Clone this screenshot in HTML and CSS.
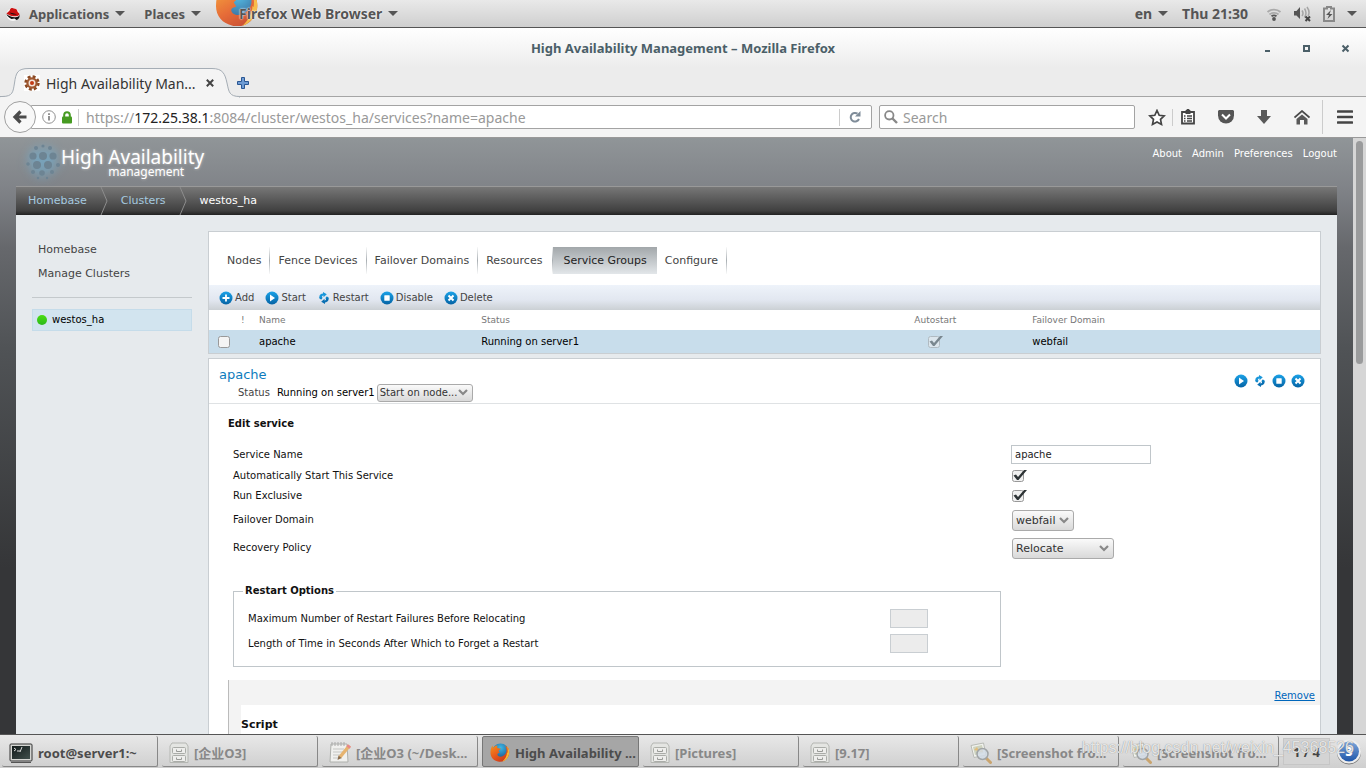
FILE: index.html
```html
<!DOCTYPE html>
<html lang="en">
<head>
<meta charset="utf-8">
<title>High Availability Management</title>
<link rel="stylesheet" href="styles.css">
</head>
<body>
<svg class="defs" aria-hidden="true">
  <defs>
    <linearGradient id="blue" x1="0" y1="0" x2="0" y2="1"><stop offset="0" stop-color="#1ba2e8"/><stop offset="1" stop-color="#0563a4"/></linearGradient>
    <linearGradient id="fox" x1="0" y1="0" x2="0.7" y2="1"><stop offset="0" stop-color="#f6921e"/><stop offset="0.55" stop-color="#e8591c"/><stop offset="1" stop-color="#c93a1a"/></linearGradient>
    <radialGradient id="globe" cx="0.5" cy="0.25" r="0.8"><stop offset="0" stop-color="#3cb8e6"/><stop offset="1" stop-color="#17407c"/></radialGradient>
    <linearGradient id="orb" x1="0" y1="0" x2="0" y2="1"><stop offset="0" stop-color="#7fa8dc"/><stop offset="1" stop-color="#1e55a8"/></linearGradient>
    <linearGradient id="gloss" x1="0" y1="0" x2="1" y2="1"><stop offset="0" stop-color="#111919"/><stop offset="1" stop-color="#41504d"/></linearGradient>
    <symbol id="i-add" viewBox="0 0 14 14"><circle cx="7" cy="7" r="6.500" fill="url(#blue)"/><path d="M7 3.500v7M3.500 7h7" stroke="#fff" stroke-width="1.800"/></symbol>
    <symbol id="i-start" viewBox="0 0 14 14"><circle cx="7" cy="7" r="6.500" fill="url(#blue)"/><path d="M5 3.500L10 7l-5 3.500z" fill="#fff"/></symbol>
    <symbol id="i-restart" viewBox="0 0 14 14"><path d="M6 1L9.800 3.200 6.500 6.200V4.500C5 4.700 4.600 5.800 5.200 7.300L3 8C1.500 5.500 2.800 2.800 6 2.600z" fill="#1b97da"/><path d="M8 13L4.200 10.800 7.500 7.800v1.700c1.500-.2 1.900-1.300 1.300-2.800L11 6c1.500 2.500.2 5.200-3 5.400z" fill="#0a6fb2"/><path d="M1.800 6.500l2.300 2.300 1.700-2.300zM12.200 7.500L9.900 5.200 8.200 7.500z" fill="#0f85c8"/></symbol>
    <symbol id="i-stop" viewBox="0 0 14 14"><circle cx="7" cy="7" r="6.500" fill="url(#blue)"/><rect x="4.300" y="4.300" width="5.400" height="5.400" rx=".5" fill="#fff"/></symbol>
    <symbol id="i-delete" viewBox="0 0 14 14"><circle cx="7" cy="7" r="6.500" fill="url(#blue)"/><path d="M4.500 4.500l5 5M9.500 4.500l-5 5" stroke="#fff" stroke-width="2"/></symbol>
    <symbol id="i-firefox" viewBox="0 0 40 40"><circle cx="21" cy="18" r="17" fill="url(#globe)"/><path d="M34 6c5 6 6 15 2 22-4 8-13 11-20 9C6 35 0 27 1 17c0-5 2-9 4-12l1 5c2-3 5-5 9-5l-1 4c2 2 6 2 8 2-1 2-4 3-5 5 1 2 2 2 2 4-2 0-5 1-4 4 2 4 8 4 11 2 5-3 8-7 7-14-1-3-2-5-3-7 2 1 4 3 5 5 0-2 0-3-1-4z" fill="url(#fox)"/><path d="M34 6c5 6 6 15 2 22-3 5-7 8-11 9 5-5 9-11 9-18l1 1c1-5 0-10-1-14z" fill="#fbb62f"/></symbol>
    <symbol id="i-cabinet" viewBox="0 0 20 22"><path d="M3 1h14l2 3v16.500H1V4z" fill="#e4e5e2" stroke="#b4b6b2"/><rect x="3.500" y="5.500" width="13" height="6" rx="1" fill="#eeeeec" stroke="#aaaca8"/><rect x="3.500" y="13.500" width="13" height="6" rx="1" fill="#eeeeec" stroke="#aaaca8"/><path d="M7.500 7.500v2h5v-2M7.500 15.500v2h5v-2" fill="none" stroke="#999b97"/></symbol>
    <symbol id="i-viewer" viewBox="0 0 22 22"><path d="M1 3.500L13.500 1 16 13 4 15.500z" fill="#f1f2ee" stroke="#b9bbb5"/><path d="M3 5l9-2 1.500 8-8.500 2z" fill="#cdd2be"/><path d="M4 8l3-3 2 4zM9 10l3-4 1 4z" fill="#e2bd79"/><path d="M16 16l4.500 4.500" stroke="#c9a46e" stroke-width="3" stroke-linecap="round"/><circle cx="12.500" cy="12" r="5.500" fill="#d2dce6" fill-opacity=".85" stroke="#a0a4a6" stroke-width="1.500"/></symbol>
  </defs>
</svg>

<header class="topbar">
  <button class="menu"><svg width="14" height="14" viewBox="0 0 14 14"><circle cx="7" cy="7.500" r="6.500" fill="#f8f8f8"/><path d="M.5 7C2 4 3.500 5 4 2.500 5 .5 7 .8 8 1.500c2 0 3 .8 3.500 3 .2 1 2 1.500 2 3-1 2-5 2-8 1.500C3 8.500 2 7 .5 7z" fill="#c11"/><path d="M.5 7c2 2 6 3.500 9 3.200 2-.2 4-1 4-2.700.6 3-1 5-3 5.500l-2-1.500-3 .5C3 10.800 1 9 .5 7zM3.500 5.500c2 2 5 2.500 7.500 1.800" fill="#111"/></svg><span>Applications</span><i class="caret"></i></button>
  <button class="menu"><span>Places</span><i class="caret"></i></button>
  <button class="menu app"><svg class="appicon" width="46" height="26"><use href="#i-firefox" y="-15" width="44" height="44"/></svg><span>Firefox Web Browser</span><i class="caret"></i></button>
  <div class="tray">
    <button class="menu">en<i class="caret"></i></button>
    <time>Thu 21:30</time>
    <svg width="16" height="14" viewBox="0 0 16 14"><path d="M1.500 5a9 8 0 0 1 13 0" fill="none" stroke="#aaa" stroke-width="1.800"/><path d="M3.500 7.500a6 5 0 0 1 9 0" fill="none" stroke="#aaa" stroke-width="1.800"/><path d="M5.500 9.200a4 3.500 0 0 1 5 0" fill="none" stroke="#555" stroke-width="1.800"/><circle cx="8" cy="12" r="1.900" fill="#555"/></svg>
    <svg width="17" height="16" viewBox="0 0 17 16"><path d="M0 5h2.500L6 1v12L2.500 9.500H0z" fill="#555"/><path d="M8 4.500q2 2.700 0 5.500M10.500 2.500q3 4.500 0 9M13 1q3.500 5 1 9" fill="none" stroke="#a5a5a5" stroke-width="1.500"/><path d="M11.500 10.500l4.500 4.500M16 10.500L11.500 15" stroke="#444" stroke-width="2"/></svg>
    <svg width="12" height="16" viewBox="0 0 12 16"><path d="M4 1h4v1.500h3v12.500H1V2.500h3z" fill="none" stroke="#888" stroke-width="2"/><path d="M8 4L3 9h3l-1.500 4L9.500 8h-3z" fill="#555"/></svg>
    <i class="caret"></i>
  </div>
</header>

<section class="browser">
  <div class="titlebar">
    <span class="wintitle">High Availability Management – Mozilla Firefox</span>
    <div class="winbuttons">
      <button aria-label="Minimize"><svg width="9" height="9" viewBox="0 0 9 9"><path d="M2 7h5" stroke="#4b5f68" stroke-width="2"/></svg></button>
      <button aria-label="Maximize"><svg width="9" height="9" viewBox="0 0 9 9"><rect x="2" y="2" width="5" height="5" fill="none" stroke="#4b5f68" stroke-width="2"/></svg></button>
      <button aria-label="Close window"><svg width="9" height="9" viewBox="0 0 9 9"><path d="M1.500 1.500l6 6M7.500 1.500l-6 6" stroke="#4b5f68" stroke-width="2"/></svg></button>
    </div>
  </div>
  <div class="tabstrip">
    <svg class="tabshape" width="240" height="30" viewBox="0 0 240 30"><path d="M0 28.500H2C13 28.500 13 24 14.500 15 16 5 17 .5 29 .5H212C223 .5 225 6 227 15 229 24 229 28.500 240 28.500V31H-1z" fill="#f4f4f4" stroke="#a5adb5"/></svg>
    <div class="tab">
      <svg width="16" height="16" viewBox="0 0 16 16"><rect width="16" height="16" fill="#fff"/><circle cx="8" cy="8" r="6.400" fill="none" stroke="#8a4a24" stroke-width="2.600" stroke-dasharray="2.900 2.100"/><circle cx="8" cy="8" r="4.600" fill="#f3e3d8" stroke="#a05830" stroke-width="2.200"/><circle cx="8" cy="8" r="2" fill="#c33b16"/></svg>
      <span>High Availability Man...</span>
      <button aria-label="Close tab"><svg width="8" height="8" viewBox="0 0 8 8"><path d="M.8.8l6.400 6.400M7.200.8L.8 7.200" stroke="#444" stroke-width="2"/></svg></button>
    </div>
    <button class="newtab" aria-label="New tab"><svg width="12" height="12" viewBox="0 0 12 12"><path d="M4.500.5h3v4h4v3h-4v4h-3v-4h-4v-3h4z" fill="#6f9cd4" stroke="#2a5693"/></svg></button>
  </div>
  <nav class="toolbar">
    <div class="address">
      <button class="back" aria-label="Back"><svg width="16" height="16" viewBox="0 0 16 16"><path d="M8.500 2.500L3 8l5.500 5.500M3.500 8h11" fill="none" stroke="#4b4b4b" stroke-width="3.200"/></svg></button>
      <div class="urlbox">
        <svg width="14" height="14" viewBox="0 0 14 14"><circle cx="7" cy="7" r="6.300" fill="none" stroke="#909090"/><path d="M7 6v4.500M7 3.200v1.700" stroke="#808080" stroke-width="1.700"/></svg>
        <svg width="12" height="13" viewBox="0 0 12 13"><rect x="1" y="5.500" width="10" height="7" rx="1" fill="#479b22"/><path d="M3.200 6V4a2.800 2.800 0 0 1 5.600 0v2" fill="none" stroke="#479b22" stroke-width="2"/></svg>
        <i class="rule"></i>
        <span class="url">https://<b>172.25.38.1</b>:8084/cluster/westos_ha/services?name=apache</span>
        <i class="rule"></i>
        <button class="reload" aria-label="Reload"><svg width="12" height="12" viewBox="0 0 12 12"><path d="M10 8A4.300 4.300 0 1 1 8.500 2.700" fill="none" stroke="#7f8c99" stroke-width="2"/><path d="M11.500 0v5.500H6z" fill="#7f8c99"/></svg></button>
      </div>
    </div>
    <label class="search"><svg width="14" height="14" viewBox="0 0 14 14"><circle cx="5.300" cy="5.300" r="4.200" fill="none" stroke="#888" stroke-width="1.800"/><path d="M8.500 8.500l4.500 4.500" stroke="#888" stroke-width="2.400"/></svg><input type="search" placeholder="Search" aria-label="Search"></label>
    <div class="navicons">
      <button aria-label="Bookmark"><svg width="18" height="17" viewBox="0 0 18 17"><path d="M9 1.500l2.200 4.800 5 .6-3.700 3.500 1 5L9 13l-4.500 2.400 1-5L1.800 6.900l5-.6z" fill="#fff" stroke="#444" stroke-width="1.700"/></svg></button>
      <i class="rule"></i>
      <button aria-label="Bookmarks list"><svg width="14" height="16" viewBox="0 0 14 16"><path d="M4.500 3L7 .5 9.500 3H13v11.500H1V3z" fill="#fff" stroke="#444" stroke-width="1.800"/><path d="M4.500 3L7 .5 9.500 3V5h-5z" fill="#444"/><path d="M3 7h1.500M6 7h5M3 9.500h1.500M6 9.500h5M3 12h1.500M6 12h5" stroke="#444" stroke-width="1.400"/></svg></button>
      <button aria-label="Pocket"><svg width="16" height="14" viewBox="0 0 16 14"><path d="M0 1l1-1h14l1 1v4.500a8 8 0 0 1-16 0z" fill="#555"/><path d="M4 4.500l4 4 4-4" fill="none" stroke="#fff" stroke-width="2"/></svg></button>
      <button aria-label="Downloads"><svg width="14" height="14" viewBox="0 0 14 14"><path d="M4 0h6v6h4l-7 8-7-8h4z" fill="#595959"/></svg></button>
      <button aria-label="Home"><svg width="16" height="15" viewBox="0 0 16 15"><path d="M.5 7.500L8 1l7.500 6.500" fill="none" stroke="#4a4a4a" stroke-width="1.700"/><path d="M2.500 9L8 4.500 13.500 9v5.500H10V10H6v4.500H2.500z" fill="#595959"/></svg></button>
      <i class="rule tall"></i>
      <button aria-label="Menu"><svg width="16" height="14" viewBox="0 0 16 14"><path d="M1 1.500h14M1 7h14M1 12.500h14" stroke="#444" stroke-width="2.600" stroke-linecap="round"/></svg></button>
    </div>
  </nav>

  <div class="viewport">
    <div class="page">
      <header class="site">
        <div class="brand">
          <svg class="logo" width="38" height="38" viewBox="0 0 38 38" fill="#6d8493"><circle cx="13" cy="5" r="2"/><circle cx="20" cy="3" r="1.600"/><circle cx="27" cy="5" r="2"/><circle cx="10" cy="13" r="3.600"/><circle cx="20" cy="13" r="4"/><circle cx="30" cy="13" r="3.600"/><circle cx="14" cy="22" r="4"/><circle cx="25" cy="22" r="4"/><circle cx="5" cy="21" r="1.800"/><circle cx="35" cy="22" r="2"/><circle cx="10" cy="29" r="2"/><circle cx="19" cy="30" r="2.800"/><circle cx="29" cy="29" r="2"/><circle cx="15" cy="35" r="1.200"/><circle cx="24" cy="35" r="1.200"/></svg>
          <div class="brandtext"><strong>High Availability</strong><small>management</small></div>
        </div>
        <nav class="account"><a href="#">About</a><a href="#">Admin</a><a href="#">Preferences</a><a href="#">Logout</a></nav>
      </header>
      <nav class="crumbs">
        <a href="#">Homebase</a>
        <svg width="8" height="28" viewBox="0 0 8 28"><path d="M1 0l6 14-6 14" fill="none" stroke="#8d8d8d"/></svg>
        <a href="#">Clusters</a>
        <svg width="8" height="28" viewBox="0 0 8 28"><path d="M1 0l6 14-6 14" fill="none" stroke="#8d8d8d"/></svg>
        <span>westos_ha</span>
      </nav>
      <div class="columns">
        <aside class="side">
          <a href="#">Homebase</a>
          <a href="#">Manage Clusters</a>
          <hr>
          <a href="#" class="cluster"><i class="dot"></i>westos_ha</a>
        </aside>
        <main class="main">
          <section class="panel">
            <nav class="tabs"><a href="#">Nodes</a><a href="#">Fence Devices</a><a href="#">Failover Domains</a><a href="#">Resources</a><a href="#" class="active">Service Groups</a><a href="#">Configure</a></nav>
            <div class="actions">
              <button><svg width="14" height="14"><use href="#i-add"/></svg>Add</button>
              <button><svg width="14" height="14"><use href="#i-start"/></svg>Start</button>
              <button><svg width="14" height="14"><use href="#i-restart"/></svg>Restart</button>
              <button><svg width="14" height="14"><use href="#i-stop"/></svg>Disable</button>
              <button><svg width="14" height="14"><use href="#i-delete"/></svg>Delete</button>
            </div>
            <table class="services">
              <colgroup><col class="c-check"><col class="c-flag"><col class="c-name"><col class="c-status"><col class="c-auto"><col></colgroup>
              <thead><tr><th></th><th>!</th><th>Name</th><th>Status</th><th class="mid">Autostart</th><th>Failover Domain</th></tr></thead>
              <tbody><tr><td><input type="checkbox" class="tick" aria-label="Select apache"></td><td></td><td>apache</td><td>Running on server1</td><td class="mid"><input type="checkbox" class="tick" checked disabled aria-label="Autostart"></td><td>webfail</td></tr></tbody>
            </table>
          </section>
          <section class="panel detail">
            <div class="head">
              <div class="about">
                <h1>apache</h1>
                <div class="status"><span>Status</span><b>Running on server1</b><select class="small" aria-label="Start on node"><option>Start on node...</option></select></div>
              </div>
              <div class="ops">
                <button aria-label="Start"><svg width="14" height="14"><use href="#i-start"/></svg></button>
                <button aria-label="Restart"><svg width="14" height="14"><use href="#i-restart"/></svg></button>
                <button aria-label="Disable"><svg width="14" height="14"><use href="#i-stop"/></svg></button>
                <button aria-label="Delete"><svg width="14" height="14"><use href="#i-delete"/></svg></button>
              </div>
            </div>
            <form class="edit">
              <h2>Edit service</h2>
              <div class="fields">
                <div class="row name"><label for="sname">Service Name</label><input id="sname" type="text" value="apache"></div>
                <div class="row"><label for="auto">Automatically Start This Service</label><input id="auto" type="checkbox" class="tick" checked></div>
                <div class="row"><label for="excl">Run Exclusive</label><input id="excl" type="checkbox" class="tick" checked></div>
                <div class="row tall"><label for="domain">Failover Domain</label><select id="domain"><option>webfail</option></select></div>
                <div class="row tall"><label for="policy">Recovery Policy</label><select id="policy" class="wide"><option>Relocate</option></select></div>
                <fieldset>
                  <legend>Restart Options</legend>
                  <div class="opt"><label for="maxr">Maximum Number of Restart Failures Before Relocating</label><input id="maxr" type="text" disabled></div>
                  <div class="opt"><label for="len">Length of Time in Seconds After Which to Forget a Restart</label><input id="len" type="text" disabled></div>
                </fieldset>
              </div>
              <div class="resource">
                <div class="bar"><a href="#">Remove</a></div>
                <div class="inner"><h3>Script</h3></div>
              </div>
            </form>
          </section>
        </main>
      </div>
    </div>
    <div class="scroll"><i></i></div>
  </div>
</section>

<footer class="taskbar">
  <button class="task live"><svg width="24" height="20" viewBox="0 0 24 20"><rect x="1" y="1" width="22" height="17" rx="1" fill="#d5d6d3" stroke="#333"/><rect x="3" y="3" width="18" height="13" fill="url(#gloss)"/><path d="M5 5l2 1.500L5 8M8 8h3M13 4l-2 5" stroke="#ddd" fill="none"/><path d="M2 19.500h20" stroke="#555"/></svg><span>root@server1:~</span></button>
  <button class="task"><svg width="20" height="22"><use href="#i-cabinet"/></svg><span>[企业O3]</span></button>
  <button class="task"><svg width="22" height="22" viewBox="0 0 22 22"><path d="M2 2h16l1 18H1z" fill="#f0f0ee" stroke="#aeb0ac"/><path d="M3 0v4M6 0v4M9 0v4M12 0v4M15 0v4" stroke="#aaa"/><path d="M4 7h11M4 10h10M4 13h10M4 16h9" stroke="#c5c6c3"/><path d="M20.500 3.500L11 15" stroke="#e6b36f" stroke-width="3.500"/><path d="M20.500 3.500l-1.500 2" stroke="#e88888" stroke-width="4"/><path d="M9.500 13.500L8.500 18l4-2z" fill="#8a6c4c"/></svg><span>[企业O3 (~/Desk...</span></button>
  <button class="task current"><svg width="20" height="20"><use href="#i-firefox"/></svg><span>High Availability ...</span></button>
  <button class="task"><svg width="20" height="22"><use href="#i-cabinet"/></svg><span>[Pictures]</span></button>
  <button class="task"><svg width="20" height="22"><use href="#i-cabinet"/></svg><span>[9.17]</span></button>
  <button class="task"><svg width="22" height="22"><use href="#i-viewer"/></svg><span>[Screenshot fro...</span></button>
  <button class="task"><svg width="22" height="22"><use href="#i-viewer"/></svg><span>[Screenshot fro...</span></button>
  <div class="pager">1 / 4</div>
  <button class="orb" aria-label="Notifications"><svg width="26" height="26" viewBox="0 0 26 26"><circle cx="13" cy="13.500" r="12" fill="#777"/><circle cx="13" cy="12.500" r="12" fill="#eee"/><circle cx="13" cy="12.500" r="10" fill="url(#orb)"/></svg><b>3</b></button>
  <span class="watermark">https://blog.csdn.net/weixin_45368526</span>
</footer>
</body>
</html>
```
FILE: styles.css
```css
* { box-sizing: border-box; }
body {
  margin: 0;
  height: 100vh;
  display: flex;
  flex-direction: column;
  overflow: hidden;
  font: 14px "Noto Sans", "Noto Sans CJK SC", sans-serif;
  color: #444;
}
button { border: 0; padding: 0; background: none; font: inherit; color: inherit; display: flex; align-items: center; }
svg { display: block; flex: none; }
a { color: inherit; text-decoration: none; }
.defs { position: absolute; width: 0; height: 0; }

/* desktop panel */
.topbar {
  flex: none;
  height: 28px;
  display: flex;
  align-items: center;
  padding: 0 9px 0 6px;
  gap: 19px;
  font-size: 13px;
  font-weight: bold;
  color: #555;
  background: linear-gradient(#e9e9e9, #cfcfcf);
  border-bottom: 1px solid #555;
}
.topbar .menu { gap: 6px; }
.topbar .menu > svg:first-child { margin-right: 3px; }
.topbar .app { position: relative; height: 27px; padding-left: 19px; font-size: 14px; }
.topbar .app span { position: relative; text-shadow: 0 0 1px #fff, 0 0 2px #fff; }
.topbar .appicon { position: absolute; left: -5px; top: 0; opacity: 0.85; }
.caret { border: 5px solid transparent; border-top-color: #555; border-bottom: 0; }
.tray { margin-left: auto; display: flex; align-items: center; gap: 12px; font-size: 14px; }
.tray time { margin: 0 6px 0 2px; }

/* browser chrome */
.browser { flex: 1; min-height: 0; display: flex; flex-direction: column; background: #ececec; }
.titlebar {
  flex: none;
  height: 40px;
  position: relative;
  display: flex;
  align-items: center;
  justify-content: center;
  background: linear-gradient(#fff, #ececec);
}
.wintitle { font-weight: bold; font-size: 13px; color: #4b5f68; }
.winbuttons { position: absolute; right: 16px; display: flex; gap: 30px; }
.tabstrip { flex: none; height: 29px; position: relative; display: flex; align-items: center; border-bottom: 1px solid #a5a5a5; }
.tabshape { position: absolute; left: 0; top: 0; }
.tab { position: relative; display: flex; align-items: center; gap: 6px; width: 218px; padding: 2px 4px 0 24px; color: #333; }
.tab button { margin-left: auto; }
.newtab { margin: 2px 0 0 19px; }
.toolbar { flex: none; height: 41px; display: flex; align-items: center; padding: 0 13px 0 4px; background: #f4f4f4; border-bottom: 1px solid #999; }
.address { flex: 1; display: flex; align-items: center; }
.back { flex: none; position: relative; width: 32px; height: 32px; justify-content: center; border: 1px solid #a0a0a0; border-radius: 50%; background: #f8f8f8; }
.urlbox { flex: 1; height: 24px; margin-left: -5px; padding: 0 10px; display: flex; align-items: center; gap: 5px; background: #fff; border: 1px solid #a3a3a3; border-radius: 0 2px 2px 0; color: #999; }
.urlbox .reload { margin-left: 4px; }
.url { flex: 1; padding-left: 2px; white-space: nowrap; }
.url b { font-weight: normal; color: #222; }
.rule { width: 1px; height: 17px; background: #ccc; }
.search { width: 256px; height: 24px; margin: 0 13px 0 7px; padding-left: 4px; display: flex; align-items: center; gap: 5px; background: #fff; border: 1px solid #a3a3a3; border-radius: 2px; }
.search input { flex: 1; min-width: 0; border: 0; padding: 0; outline: 0; background: none; font: inherit; }
.search input::placeholder { color: #999; opacity: 1; }
.navicons { display: flex; align-items: center; gap: 23px; }
.navicons .rule { margin: 0 -15px 0 -17px; }
.navicons .rule.tall { height: 34px; margin: 0 -9px 0 -11px; }

/* web page */
.viewport { flex: 1; min-height: 0; display: flex; }
.page {
  flex: 1;
  min-width: 0;
  overflow: hidden;
  display: flex;
  flex-direction: column;
  padding: 0 16px;
  font: 10px/14px "DejaVu Sans", "Liberation Sans", sans-serif;
  color: #111;
  background: linear-gradient(#909598 0, #808388 50px, #66686c 110px, #505356 210px, #353638 430px);
}
.scroll { flex: none; width: 13px; padding: 3px; background: #d6d6d6; }
.scroll i { display: block; width: 7px; height: 223px; border-radius: 4px; background: #9a9b9c; }
.site { flex: none; height: 48px; display: flex; justify-content: space-between; }
.brand { display: flex; align-items: flex-start; color: #fff; padding: 5px 0 0 7px; }
.logo { filter: drop-shadow(0 0 5px #6ab4dc); }
.brandtext { display: flex; flex-direction: column; align-items: flex-end; padding: 5px 0 0; font-family: "Noto Sans", sans-serif; text-shadow: 0 0 3px #ccc; }
.brandtext strong { font-weight: normal; font-size: 19px; line-height: 18px; }
.brandtext small { font-size: 12px; line-height: 12px; padding-right: 20px; }
.account { display: flex; gap: 10px; padding-top: 9px; color: #fff; }
.crumbs {
  flex: none;
  height: 29px;
  display: flex;
  align-items: center;
  gap: 13px;
  padding-left: 12px;
  color: #fff;
  font-size: 11px;
  background: linear-gradient(#777, #404040 85%, #222);
  border-top: 1px solid #999;
}
.crumbs a { color: #a6cbe0; }
.columns { flex: 1; min-height: 0; display: flex; background: #e6eaed; padding: 16px 16px 0; }
.side { flex: none; width: 160px; margin-right: 16px; display: flex; flex-direction: column; font-size: 11px; color: #444; }
.side > a { padding: 5px 6px; }
.side > a:first-child { padding-top: 12px; }
.side hr { width: 100%; border: 0; border-top: 1px solid #c4c9cc; margin: 11px 0 11px; }
.side .cluster { display: flex; align-items: center; gap: 5px; height: 22px; padding: 0 4px; font-size: 10px; color: #000; background: #d2e4ef; border: 1px solid #c5dcea; }
.dot { width: 10px; height: 10px; border-radius: 50%; background: linear-gradient(#4ade10, #2cb81c); }
.main { flex: 1; min-width: 0; }
.panel { background: #fff; border: 1px solid #c9ced2; }
.tabs { display: flex; padding: 15px 10px 11px; font-size: 11px; color: #444; }
.tabs a { padding: 7px 8px 6px; border-right: 1px solid; border-image: linear-gradient(#fff, #aab0b4, #fff) 1; }
.tabs a:nth-child(4) { padding-right: 10px; }
.tabs .active { padding: 7px 10px 6px; color: #222; border-right: 0; background: linear-gradient(#a2a7aa, #e2e6e9); }
.actions { height: 25px; display: flex; align-items: center; gap: 11px; padding: 0 10px; color: #444; background: linear-gradient(#eef3fa, #e2e7f0 60%, #cbd0d4); }
.actions button { gap: 2px; }
.services { width: 100%; table-layout: fixed; border-collapse: collapse; }
.c-check { width: 30px; } .c-flag { width: 20px; } .c-name { width: 20%; } .c-status { width: 37%; } .c-auto { width: 86px; }
.services th { height: 20px; padding: 0; text-align: left; font-size: 9px; font-weight: normal; color: #777; }
.services td { height: 23px; padding: 0; background: #c8ddeb; color: #000; }
.services td:first-child { padding-left: 9px; }
.services th:nth-child(2) { padding-left: 2px; }
.services th:last-child, .services td:last-child { padding-left: 54px; }
.services .mid { text-align: center; }
.tick {
  appearance: none;
  display: block;
  width: 15px;
  height: 14px;
  margin: 0;
  background: center / 15px 14px no-repeat url("data:image/svg+xml,%3Csvg xmlns='http://www.w3.org/2000/svg' viewBox='0 0 15 14'%3E%3Crect x='.5' y='1.500' width='11' height='11' rx='2' fill='%23f4f4f4' stroke='%23999'/%3E%3C/svg%3E");
}
.tick:checked {
  background-image: url("data:image/svg+xml,%3Csvg xmlns='http://www.w3.org/2000/svg' viewBox='0 0 15 14'%3E%3Crect x='.5' y='1.500' width='11' height='11' rx='2' fill='%23f0f0f0' stroke='%23999'/%3E%3Cpath d='M1.500 6.500L4 5.500l2 2.500L12 1h3L6.500 11H5z' fill='%232e3436'/%3E%3C/svg%3E");
}
.tick:disabled { opacity: 0.5; }
.mid .tick { margin: auto; }

.detail { margin-top: 4px; min-height: 800px; }
.head { display: flex; justify-content: space-between; align-items: center; height: 45px; padding: 0 15px 0 10px; border-bottom: 1px solid #dfe2e4; }
.about { padding-top: 5px; }
h1 { margin: 0; font-size: 13px; line-height: 18px; font-weight: normal; color: #0d7bbd; }
.status { display: flex; align-items: center; height: 18px; padding-left: 19px; color: #444; }
.status b { font-weight: normal; color: #000; margin: 0 2px 0 7px; }
.ops { display: flex; gap: 5px; }
select {
  appearance: none;
  height: 21px;
  width: 62px;
  padding: 0 14px 0 3px;
  font: 11px "DejaVu Sans", sans-serif;
  color: #333;
  border: 1px solid #aaa;
  border-radius: 3px;
  background: url("data:image/svg+xml,%3Csvg xmlns='http://www.w3.org/2000/svg' viewBox='0 0 10 7'%3E%3Cpath d='M1 1l4 4 4-4' fill='none' stroke='%23888' stroke-width='2.200'/%3E%3C/svg%3E") right 4px center / 10px 7px no-repeat, linear-gradient(#fafafa, #d9d9d9);
}
select.small { width: 96px; height: 18px; padding: 0 12px 0 2px; font-size: 10px; }
select.wide { width: 102px; }
.edit { padding: 13px 0 0 19px; }
h2 { margin: 0; font-size: 10px; line-height: 14px; }
.fields { padding: 12px 0 0 5px; }
.row { display: grid; grid-template-columns: 1fr 309px; align-items: center; height: 20px; }
.row.name { height: 23px; }
.row.tall { height: 28px; }
.row .tick, .row select { margin-left: 1px; }
input[type="text"] { font: 10px "DejaVu Sans", sans-serif; }
.row input[type="text"] { width: 140px; height: 19px; padding: 0 3px; border: 1px solid #c0c6ca; color: #222; }
fieldset { margin: 22px 319px 0 0; padding: 8px 14px 10px; border: 1px solid #c0c6ca; }
legend { margin-left: -5px; padding: 0 2px; font-weight: bold; }
.opt { display: grid; grid-template-columns: 1fr 96px; align-items: center; height: 25px; }
.opt input { width: 38px; height: 19px; border: 1px solid #c9ced2; background: #ececec; padding: 0; }
.resource { margin-top: 13px; border-left: 1px solid #bbb; background: #f3f3f3; padding-left: 12px; }
.bar { height: 25px; display: flex; align-items: center; justify-content: flex-end; padding: 6px 5px 0 0; }
.bar a { color: #06b; text-decoration: underline; }
.inner { height: 300px; background: #fff; padding-top: 12px; }
h3 { margin: 0; font-size: 11px; line-height: 16px; }

/* task list */
.taskbar { flex: none; position: relative; height: 34px; display: flex; align-items: center; padding: 0 4px 0 2px; gap: 4px; background: linear-gradient(#e8e8e8, #cfcfcf); border-top: 1px solid #555; font-size: 13px; font-weight: bold; }
.task { flex: 1; min-width: 0; height: 31px; padding: 3px 6px 0 7px; gap: 5px; color: #888; white-space: nowrap; overflow: hidden; border: 0 solid #888; border-width: 0 1px 1px 0; border-radius: 2px; }
.task.live, .task.current { color: #4c4c4c; }
.task.current { background: #a6a6a6; border: 1px solid #777; }
.pager { width: 47px; height: 27px; margin-right: 2px; display: flex; align-items: center; justify-content: center; border: 1px solid #c6c6c6; background: #d4d4d4; color: #444; }
.orb { position: relative; justify-content: center; width: 26px; color: #fff; }
.orb b { position: absolute; font-size: 12px; }
.watermark { position: absolute; right: 12px; top: 4px; font: 16px/18px "Liberation Sans", Arial, sans-serif; color: rgba(255, 255, 255, 0.8); text-shadow: 0 0 1px #777; pointer-events: none; }
```
